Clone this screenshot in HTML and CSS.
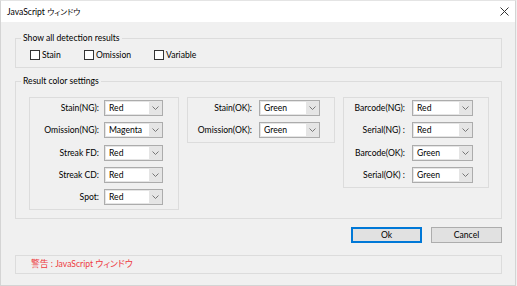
FILE: index.html
```html
<!DOCTYPE html>
<html>
<head>
<meta charset="utf-8">
<link rel="stylesheet" href="styles.css">
</head>
<body>
<div class="window">
  <div class="titlebar">
    <span class="title">JavaScript <span class="ja">ウィンドウ</span></span>
    <svg class="close" width="9" height="9" viewBox="0 0 9 9"><path d="M0.5 0.5 L8.5 8.5 M8.5 0.5 L0.5 8.5" stroke="#333" stroke-width="1" fill="none"/></svg>
  </div>
  <div class="content">
    <div class="group group-detect">
      <span class="legend">Show all detection results</span>
      <div class="checks">
        <label class="check"><span class="box"></span>Stain</label>
        <label class="check"><span class="box"></span>Omission</label>
        <label class="check"><span class="box"></span>Variable</label>
      </div>
    </div>
    <div class="group group-colors">
      <span class="legend">Result color settings</span>
      <div class="panels">
        <div class="panel panel-a">
          <span class="lbl">Stain(NG):</span><div class="combo"><span class="val">Red</span><span class="arrow"><svg width="7" height="4" viewBox="0 0 7 4"><path d="M0.5 0.5 L3.5 3.5 L6.5 0.5" stroke="#777" fill="none"/></svg></span></div>
          <span class="lbl">Omission(NG):</span><div class="combo"><span class="val">Magenta</span><span class="arrow"><svg width="7" height="4" viewBox="0 0 7 4"><path d="M0.5 0.5 L3.5 3.5 L6.5 0.5" stroke="#777" fill="none"/></svg></span></div>
          <span class="lbl">Streak FD:</span><div class="combo"><span class="val">Red</span><span class="arrow"><svg width="7" height="4" viewBox="0 0 7 4"><path d="M0.5 0.5 L3.5 3.5 L6.5 0.5" stroke="#777" fill="none"/></svg></span></div>
          <span class="lbl">Streak CD:</span><div class="combo"><span class="val">Red</span><span class="arrow"><svg width="7" height="4" viewBox="0 0 7 4"><path d="M0.5 0.5 L3.5 3.5 L6.5 0.5" stroke="#777" fill="none"/></svg></span></div>
          <span class="lbl">Spot:</span><div class="combo"><span class="val">Red</span><span class="arrow"><svg width="7" height="4" viewBox="0 0 7 4"><path d="M0.5 0.5 L3.5 3.5 L6.5 0.5" stroke="#777" fill="none"/></svg></span></div>
        </div>
        <div class="panel panel-b">
          <span class="lbl">Stain(OK):</span><div class="combo"><span class="val">Green</span><span class="arrow"><svg width="7" height="4" viewBox="0 0 7 4"><path d="M0.5 0.5 L3.5 3.5 L6.5 0.5" stroke="#777" fill="none"/></svg></span></div>
          <span class="lbl">Omission(OK):</span><div class="combo"><span class="val">Green</span><span class="arrow"><svg width="7" height="4" viewBox="0 0 7 4"><path d="M0.5 0.5 L3.5 3.5 L6.5 0.5" stroke="#777" fill="none"/></svg></span></div>
        </div>
        <div class="panel panel-c">
          <span class="lbl">Barcode(NG):</span><div class="combo"><span class="val">Red</span><span class="arrow"><svg width="7" height="4" viewBox="0 0 7 4"><path d="M0.5 0.5 L3.5 3.5 L6.5 0.5" stroke="#777" fill="none"/></svg></span></div>
          <span class="lbl">Serial(NG) :</span><div class="combo"><span class="val">Red</span><span class="arrow"><svg width="7" height="4" viewBox="0 0 7 4"><path d="M0.5 0.5 L3.5 3.5 L6.5 0.5" stroke="#777" fill="none"/></svg></span></div>
          <span class="lbl">Barcode(OK):</span><div class="combo"><span class="val">Green</span><span class="arrow"><svg width="7" height="4" viewBox="0 0 7 4"><path d="M0.5 0.5 L3.5 3.5 L6.5 0.5" stroke="#777" fill="none"/></svg></span></div>
          <span class="lbl">Serial(OK) :</span><div class="combo"><span class="val">Green</span><span class="arrow"><svg width="7" height="4" viewBox="0 0 7 4"><path d="M0.5 0.5 L3.5 3.5 L6.5 0.5" stroke="#777" fill="none"/></svg></span></div>
        </div>
      </div>
    </div>
    <div class="buttons">
      <button class="btn btn-default">Ok</button>
      <button class="btn">Cancel</button>
    </div>
    <div class="status"><span class="ja">警告</span> : JavaScript <span class="ja">ウィンドウ</span></div>
  </div>
</div>
</body>
</html>
```

FILE: styles.css
```css
* { box-sizing: border-box; }
html, body { margin: 0; padding: 0; background: #f0f0f0; }
body {
  font-family: Lato, "Noto Sans CJK JP", sans-serif;
  font-size: 8.6px;
  color: #000;
}
.ja {
  font-family: "Noto Sans CJK JP", sans-serif;
  font-feature-settings: "palt";
}
.window {
  width: 516px;
  height: 286px;
  background: #f0f0f0;
  border-left: 1px solid #d4d4d4;
  border-right: 1px solid #d4d4d4;
  border-bottom: 1px solid #d4d4d4;
  border-top: 1px solid #e4e4e4;
}
.titlebar {
  height: 21px;
  background: #fff;
  display: flex;
  align-items: center;
  justify-content: space-between;
  padding: 0 6px 0 6px;
}
.title { font-size: 8.6px; line-height: 12px; }
.title .ja { font-size: 7.8px; }
.close { display: block; }
.content { padding: 0 13px 0 14px; }
.group {
  position: relative;
  border: 1px solid #dcdcdc;
}
.legend {
  position: absolute;
  top: -7px;
  left: 5px;
  padding: 0 2px;
  line-height: 12px;
  background: #f0f0f0;
}
.group-detect { margin-top: 16px; height: 30px; padding: 11px 0 0 14px; }
.checks {
  display: grid;
  grid-template-columns: 54px 70px auto;
}
.check { display: flex; align-items: center; gap: 2px; height: 10px; line-height: 10px; }
.box {
  width: 10px; height: 10px;
  border: 1px solid #333;
  background: #fff;
  flex: none;
}
.group-colors { margin-top: 13px; height: 138px; padding: 15px 0 0 13px; }
.panels { display: flex; gap: 8px; align-items: flex-start; }
.panel {
  border: 1px solid #dcdcdc;
  display: grid;
  column-gap: 6px;
  row-gap: 6.25px;
  grid-auto-rows: 16px;
  align-items: center;
  padding: 2px 14px 4px 0;
}
.panel-a { width: 150px; grid-template-columns: 1fr 59px; padding-right: 15px; column-gap: 5px; }
.panel-b { width: 148px; grid-template-columns: 1fr 61px; column-gap: 7px; }
.panel-c { width: 146px; grid-template-columns: 1fr 61px; padding-right: 15px; column-gap: 7px; }
.lbl { text-align: right; white-space: nowrap; line-height: 12px; }
.combo {
  height: 16px;
  display: flex;
  border: 1px solid #acacac;
  background: #e5e5e5;
}
.val {
  flex: 1;
  background: #fff;
  margin: 1px 0 1px 1px;
  padding-left: 3px;
  line-height: 12px;
}
.arrow {
  width: 13px;
  display: flex;
  align-items: center;
  justify-content: center;
}
.arrow svg { display: block; }
.buttons {
  display: flex;
  justify-content: flex-end;
  gap: 9px;
  margin-top: 8px;
}
.btn {
  width: 71px;
  height: 16px;
  padding: 0;
  font: inherit;
  color: #000;
  background: #e1e1e1;
  border: 1px solid #adadad;
  line-height: 12px;
}
.btn-default { border: 1px solid #0078d7; box-shadow: inset 0 0 0 1px #0078d7; }
.status {
  margin-top: 12px;
  height: 19px;
  border: 1px solid #dcdcdc;
  color: #ee3a3f;
  line-height: 16px;
  padding-left: 15px;
  font-size: 8.6px;
}
.status .ja { font-size: 8.8px; }
```
